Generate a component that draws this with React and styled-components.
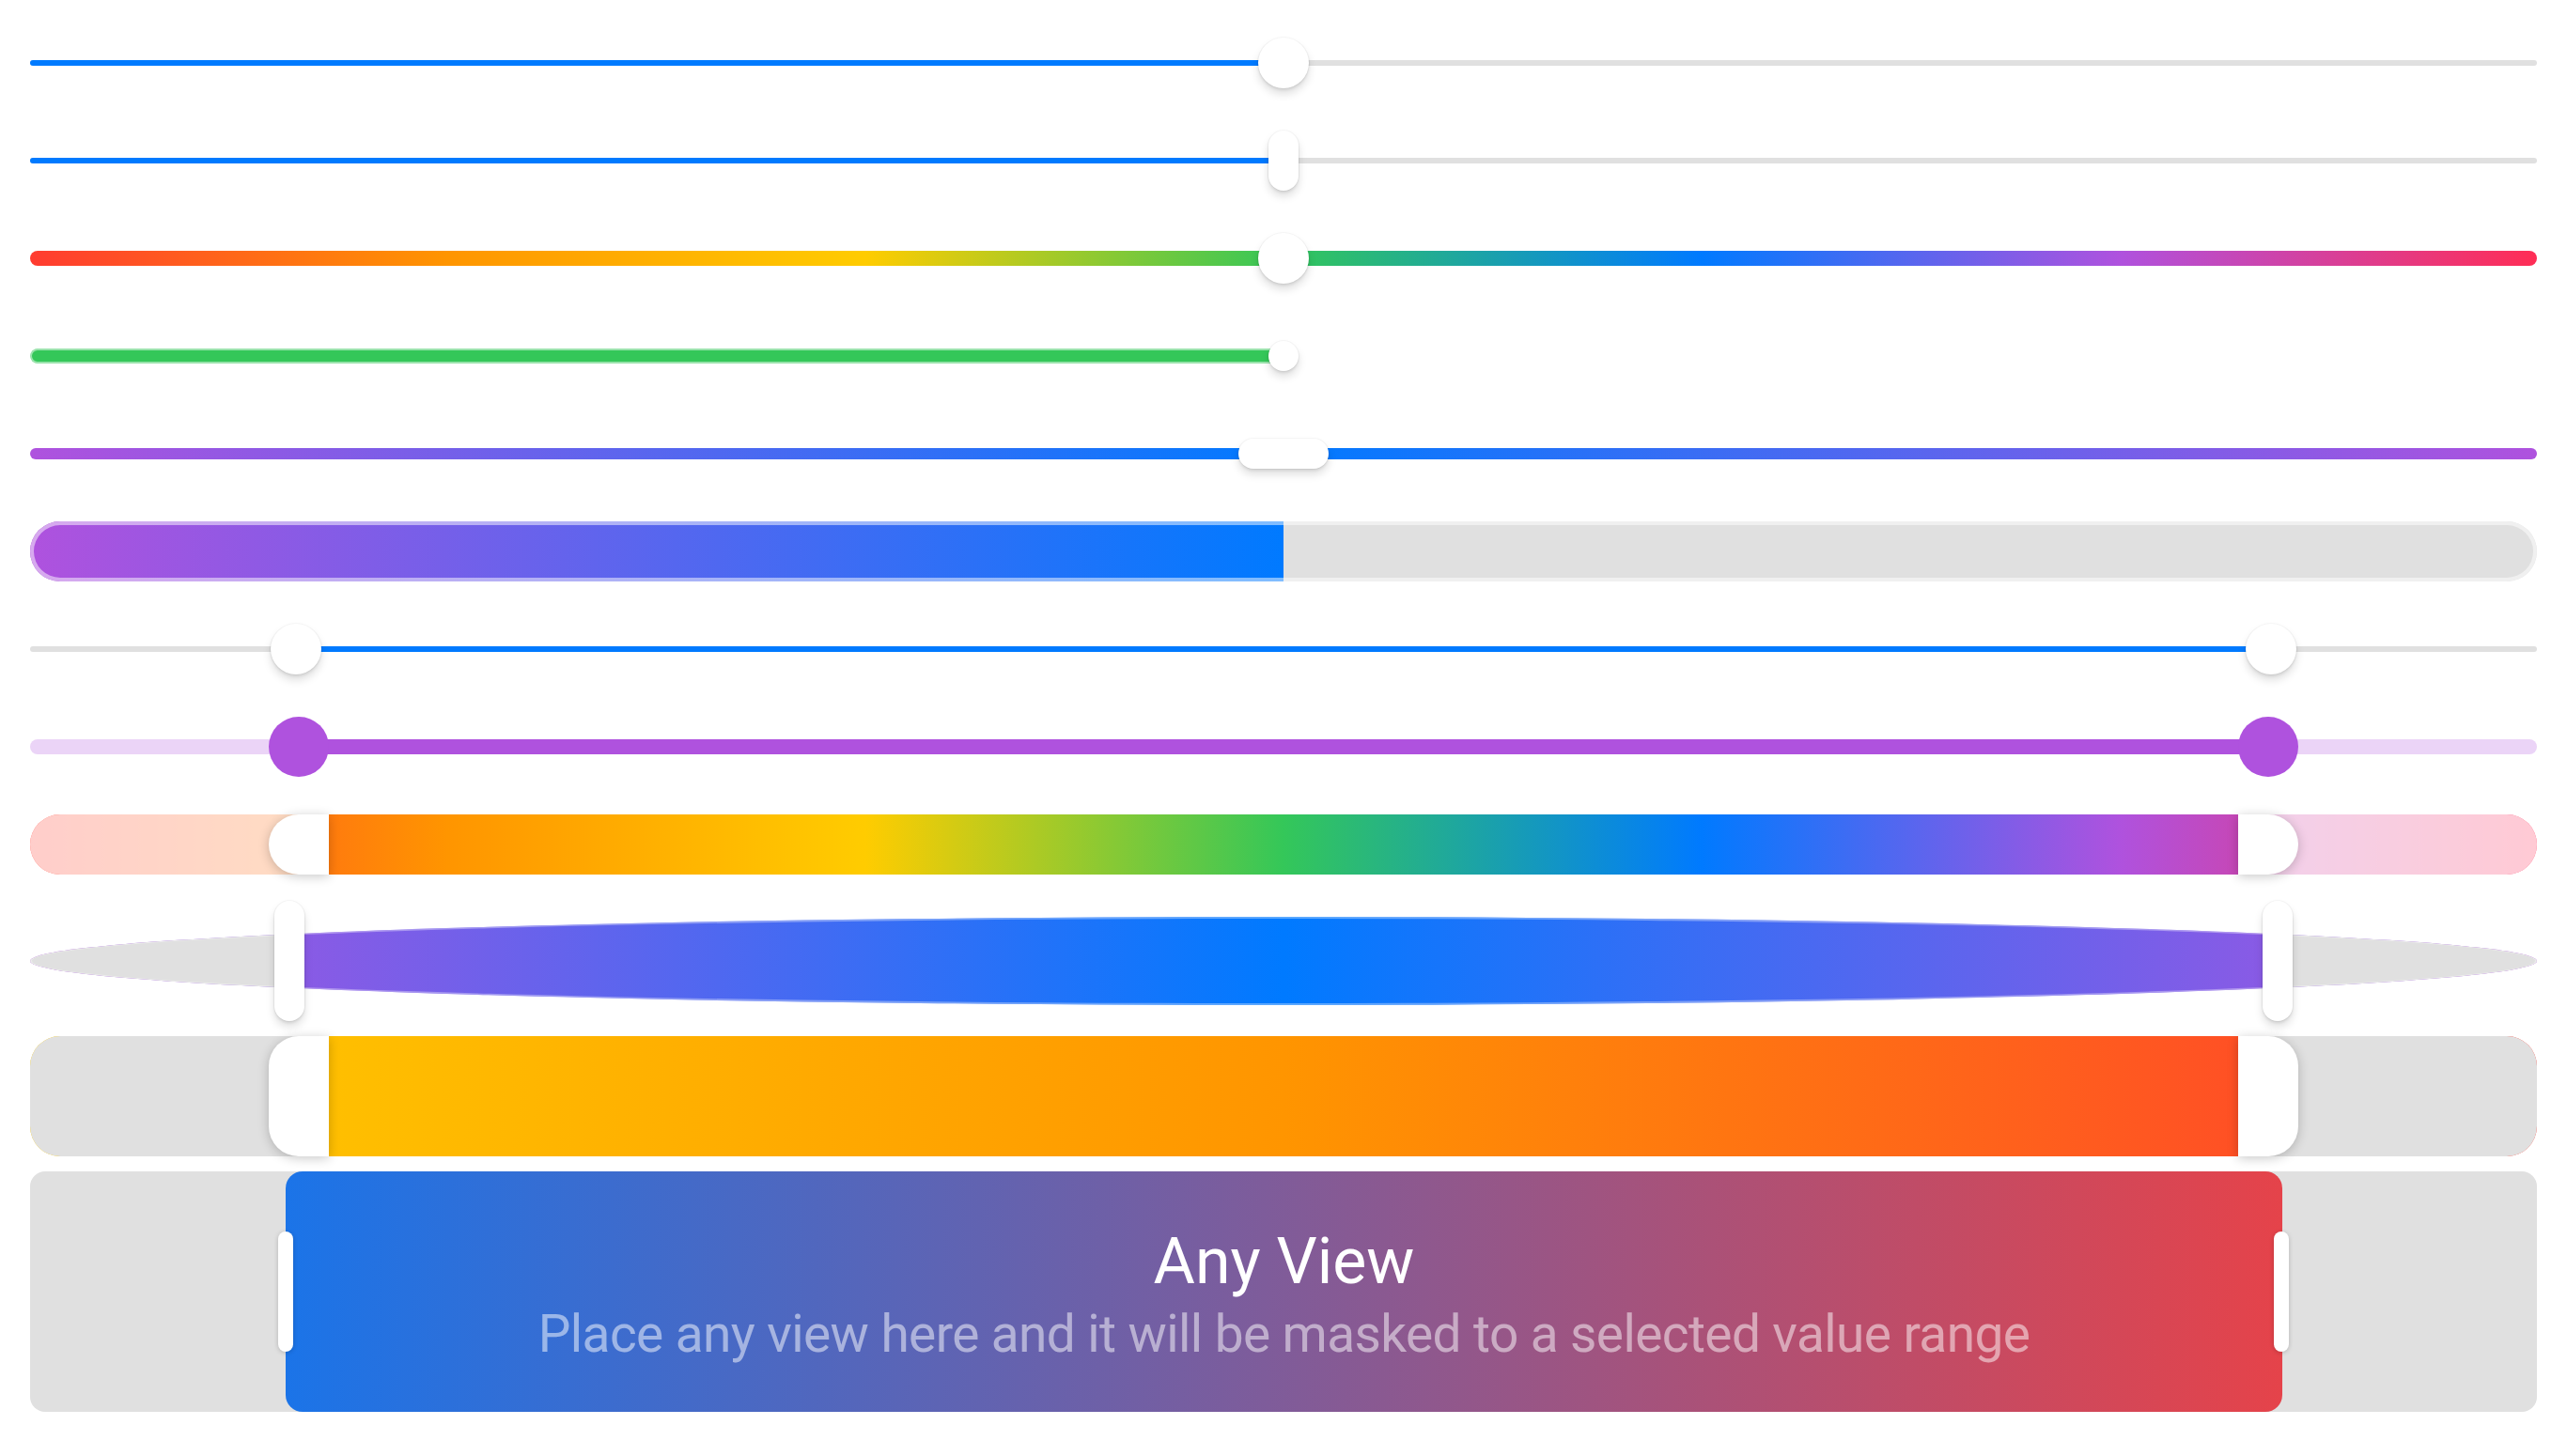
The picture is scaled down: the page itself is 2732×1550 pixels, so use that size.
import React from "react";
import styled, { createGlobalStyle } from "styled-components";

// all x values are measured from the left end of the track (track is 2668px wide)
const RAINBOW =
    "linear-gradient(90deg, #FF3B30 0%, #FF9500 16.67%, #FFCC00 33.33%, #34C759 50%, #007AFF 66.67%, #AF52DE 83.33%, #FF2D55 100%)";
const PURPLE_BLUE = "linear-gradient(90deg, #AF52DE 0%, #007AFF 50%, #AF52DE 100%)";
const SUNSET = "linear-gradient(90deg, #FFCC00 0%, #FF9500 50%, #FF3B30 100%)";

const GlobalStyle = createGlobalStyle`
    html, body {
        margin: 0;
        padding: 0;
        background: #fff;
        overflow: hidden;
    }
    body {
        font-family: Roboto, Inter, "Noto Sans", sans-serif;
    }
`;

const App = () => {
    return (
        <>
            <GlobalStyle />
            <Page>
                {/* plain slider */}
                <Row>
                    <Track $h={6} $bg="#E0E0E0">
                        <Segment $w={1334} $bg="#007AFF" />
                    </Track>
                    <Thumb $x={1334} $w={54} $h={54} />
                </Row>

                {/* pill knob */}
                <Row>
                    <Track $h={6} $bg="#E0E0E0">
                        <Segment $w={1334} $bg="#007AFF" />
                    </Track>
                    <Thumb $x={1334} $w={32} $h={64} />
                </Row>

                {/* rainbow */}
                <Row>
                    <Track $h={16} $bg={RAINBOW} />
                    <Thumb $x={1334} $w={54} $h={54} />
                </Row>

                {/* green, no max track */}
                <Row>
                    <Track $h={16}>
                        <Segment $w={1334} $bg="#34C759" $ring={2} />
                    </Track>
                    <Thumb $x={1334} $w={32} $h={32} />
                </Row>

                {/* wide knob */}
                <Row>
                    <Track $h={12} $bg={PURPLE_BLUE} />
                    <Thumb $x={1334} $w={96} $h={32} />
                </Row>

                {/* progress */}
                <Row>
                    <Track $h={64} $bg="#E0E0E0" $ring={4}>
                        <Segment $w={1334} $bg="linear-gradient(90deg, #AF52DE, #007AFF)" />
                    </Track>
                </Row>

                {/* range */}
                <Row>
                    <Track $h={6} $bg="#E0E0E0">
                        <Segment $w={283} />
                        <Segment $w={2102} $bg="#007AFF" />
                    </Track>
                    <Thumb $x={283} $w={54} $h={54} />
                    <Thumb $x={2385} $w={54} $h={54} />
                </Row>

                {/* purple range */}
                <Row>
                    <Track $h={16} $bg="#EBD4F7">
                        <Segment $w={286} />
                        <Segment $w={2096} $bg="#AF52DE" />
                    </Track>
                    <Thumb $x={286} $w={64} $h={64} $color="#AF52DE" $flat />
                    <Thumb $x={2382} $w={64} $h={64} $color="#AF52DE" $flat />
                </Row>

                {/* rainbow range, faded outside */}
                <Row>
                    <Track $h={64} $bg={RAINBOW}>
                        <Segment $w={318} $bg="rgba(255,255,255,0.75)" />
                        <Segment />
                        <Segment $w={318} $bg="rgba(255,255,255,0.75)" />
                    </Track>
                    <Thumb $x={286} $w={64} $h={64} $radius="32px 0 0 32px" $soft />
                    <Thumb $x={2382} $w={64} $h={64} $radius="0 32px 32px 0" $soft />
                </Row>

                {/* lens */}
                <Row $h={128} $gap={28}>
                    <Lens>
                        <Segment $w={276} $bg="#E0E0E0" />
                        <Segment />
                        <Segment $w={276} $bg="#E0E0E0" />
                    </Lens>
                    <Thumb $x={276} $w={32} $h={128} />
                    <Thumb $x={2392} $w={32} $h={128} />
                </Row>

                {/* big block range */}
                <Row $h={128} $gap={16}>
                    <Block $bg={SUNSET}>
                        <Segment $w={318} $bg="#E0E0E0" />
                        <Segment />
                        <Segment $w={318} $bg="#E0E0E0" />
                    </Block>
                    <Thumb $x={286} $w={64} $h={128} $radius="32px 0 0 32px" $soft />
                    <Thumb $x={2382} $w={64} $h={128} $radius="0 32px 32px 0" $soft />
                </Row>

                {/* masked view */}
                <Row $h={256} $gap={16}>
                    <ViewBox>
                        <Segment $w={272} />
                        <MaskedView>
                            <Title>Any View</Title>
                            <Subtitle>Place any view here and it will be masked to a selected value range</Subtitle>
                        </MaskedView>
                        <Segment />
                    </ViewBox>
                    <Handle $x={272} />
                    <Handle $x={2396} />
                </Row>
            </Page>
        </>
    );
};

const Page = styled.div`
    display: flex;
    flex-direction: column;
    box-sizing: border-box;
    width: 2732px;
    padding: 35px 32px 47px;
`;

const Row = styled.div`
    position: relative;
    display: flex;
    align-items: center;
    height: ${(p) => p.$h ?? 64}px;
    margin-top: ${(p) => p.$gap ?? 40}px;

    &:first-child {
        margin-top: 0;
    }
`;

const Track = styled.div`
    position: relative;
    display: flex;
    width: 100%;
    height: ${(p) => p.$h}px;
    border-radius: ${(p) => p.$h / 2}px;
    overflow: hidden;
    background: ${(p) => p.$bg || "transparent"};

    &::after {
        content: "";
        position: absolute;
        inset: 0;
        border-radius: inherit;
        box-shadow: ${(p) => (p.$ring ? `inset 0 0 0 ${p.$ring}px rgba(255,255,255,0.5)` : "none")};
        pointer-events: none;
    }
`;

const Segment = styled.div`
    flex: ${(p) => (p.$w != null ? `0 0 ${p.$w}px` : "1 1 auto")};
    height: 100%;
    background: ${(p) => p.$bg || "transparent"};
    border-radius: ${(p) => (p.$ring ? "8px" : "0")};
    box-shadow: ${(p) => (p.$ring ? `inset 0 0 0 ${p.$ring}px rgba(255,255,255,0.5)` : "none")};
`;

const Lens = styled.div`
    position: relative;
    display: flex;
    width: 100%;
    height: 94px;
    border-radius: 50%;
    overflow: hidden;
    background: ${PURPLE_BLUE};

    &::after {
        content: "";
        position: absolute;
        inset: 0;
        border-radius: 50%;
        box-shadow: inset 0 0 0 2px rgba(255,255,255,0.35);
    }
`;

const Block = styled.div`
    display: flex;
    width: 100%;
    height: 100%;
    border-radius: 32px;
    overflow: hidden;
    background: ${(p) => p.$bg};
`;

const ViewBox = styled.div`
    display: flex;
    width: 100%;
    height: 100%;
    border-radius: 16px;
    background: #E0E0E0;
`;

const MaskedView = styled.div`
    flex: 0 0 2125px;
    height: 100%;
    border-radius: 18px;
    background: linear-gradient(90deg, #1B74E8, #E5434A);
    display: flex;
    flex-direction: column;
    align-items: center;
    justify-content: center;
    text-align: center;
`;

const Title = styled.div`
    font-size: 68px;
    line-height: 80px;
    color: #fff;
`;

const Subtitle = styled.div`
    margin: 5px 0 -5px;
    font-size: 55px;
    line-height: 64px;
    letter-spacing: -0.6px;
    color: rgba(255, 255, 255, 0.5);
    white-space: nowrap;
`;

const Thumb = styled.div`
    position: absolute;
    top: 50%;
    left: ${(p) => p.$x}px;
    width: ${(p) => p.$w}px;
    height: ${(p) => p.$h}px;
    margin-left: ${(p) => -p.$w / 2}px;
    margin-top: ${(p) => -p.$h / 2}px;
    border-radius: ${(p) => p.$radius ?? `${Math.min(p.$w, p.$h) / 2}px`};
    background: ${(p) => p.$color || "#fff"};
    box-shadow: ${(p) =>
        p.$flat
            ? "none"
            : p.$soft
            ? "0 2px 12px rgba(0,0,0,0.22)"
            : "0 6px 10px rgba(0,0,0,0.13), 0 2px 3px rgba(0,0,0,0.08), 0 0 0 1px rgba(0,0,0,0.03)"};
`;

const Handle = styled.div`
    position: absolute;
    top: 50%;
    left: ${(p) => p.$x - 8}px;
    width: 16px;
    height: 128px;
    margin-top: -64px;
    border-radius: 8px;
    background: #fff;
    box-shadow: 0 1px 5px rgba(0, 0, 0, 0.2);
`;

export default App;
